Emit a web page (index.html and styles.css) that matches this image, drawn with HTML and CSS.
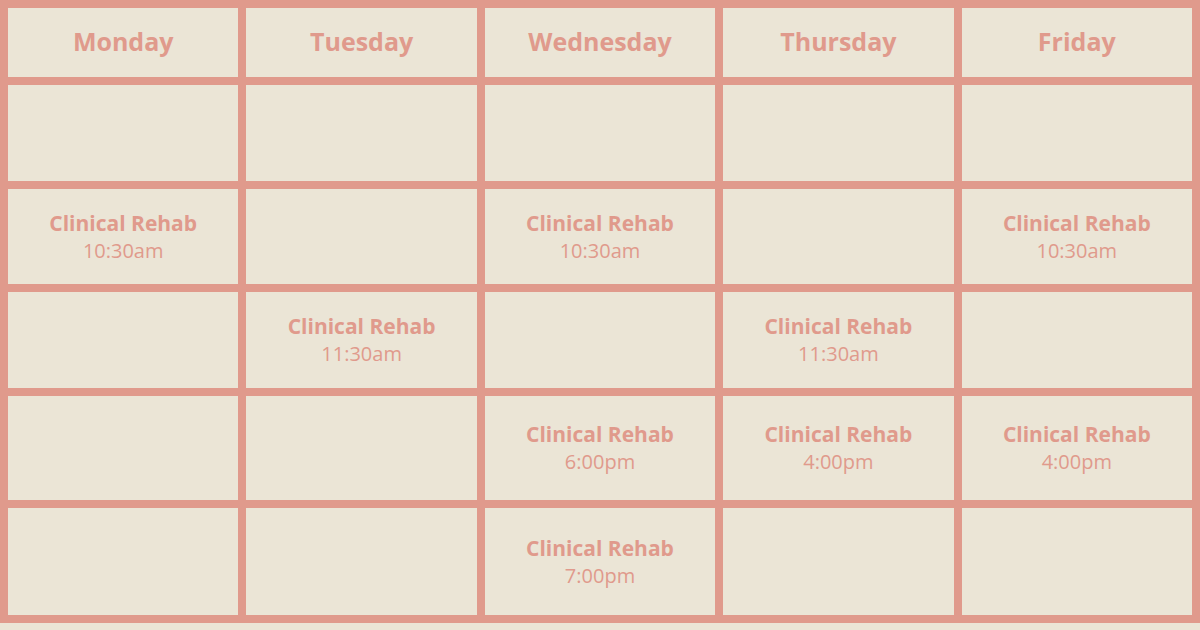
FILE: index.html
```html
<!DOCTYPE html>
<html lang="en">
<head>
<meta charset="utf-8">
<title>Schedule</title>
<link rel="stylesheet" href="styles.css">
</head>
<body>
<div class="schedule">
  <div class="cell head">Monday</div>
  <div class="cell head">Tuesday</div>
  <div class="cell head">Wednesday</div>
  <div class="cell head">Thursday</div>
  <div class="cell head">Friday</div>

  <div class="cell"></div>
  <div class="cell"></div>
  <div class="cell"></div>
  <div class="cell"></div>
  <div class="cell"></div>

  <div class="cell"><span class="name">Clinical Rehab</span><span class="time">10:30am</span></div>
  <div class="cell"></div>
  <div class="cell"><span class="name">Clinical Rehab</span><span class="time">10:30am</span></div>
  <div class="cell"></div>
  <div class="cell"><span class="name">Clinical Rehab</span><span class="time">10:30am</span></div>

  <div class="cell"></div>
  <div class="cell"><span class="name">Clinical Rehab</span><span class="time">11:30am</span></div>
  <div class="cell"></div>
  <div class="cell"><span class="name">Clinical Rehab</span><span class="time">11:30am</span></div>
  <div class="cell"></div>

  <div class="cell"></div>
  <div class="cell"></div>
  <div class="cell"><span class="name">Clinical Rehab</span><span class="time">6:00pm</span></div>
  <div class="cell"><span class="name">Clinical Rehab</span><span class="time">4:00pm</span></div>
  <div class="cell"><span class="name">Clinical Rehab</span><span class="time">4:00pm</span></div>

  <div class="cell"></div>
  <div class="cell"></div>
  <div class="cell"><span class="name">Clinical Rehab</span><span class="time">7:00pm</span></div>
  <div class="cell"></div>
  <div class="cell"></div>
</div>
</body>
</html>
```

FILE: styles.css
```css
html, body {
  margin: 0;
  padding: 0;
  background: #ebe5d6;
  width: 1200px;
  height: 630px;
  overflow: hidden;
}

.schedule {
  display: grid;
  grid-template-columns: repeat(5, 1fr);
  grid-template-rows: 69px 96px 95px 96px 104px 107px;
  gap: 8px;
  padding: 8px;
  background: #e09a8c;
  width: 1200px;
  box-sizing: border-box;
  font-family: "Open Sans", "Noto Sans", sans-serif;
  color: #e09a8c;
}

.cell {
  background: #ebe5d6;
  display: flex;
  flex-direction: column;
  align-items: center;
  justify-content: center;
  text-align: center;
}

.head {
  font-size: 25px;
  font-weight: 700;
  padding-bottom: 4px;
  box-sizing: border-box;
}

.name {
  font-size: 21px;
  font-weight: 700;
  line-height: 28px;
}

.time {
  font-size: 20px;
  font-weight: 400;
  line-height: 28px;
}
```
